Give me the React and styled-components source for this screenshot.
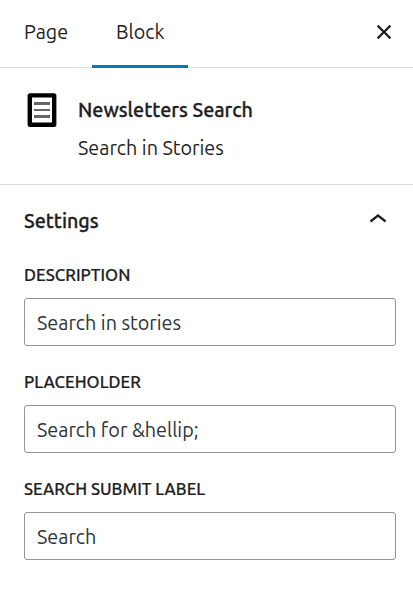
import React from 'react';
import styled, { createGlobalStyle } from 'styled-components';

const fields = [
  { id: 'description', label: 'Description', value: 'Search in stories' },
  { id: 'placeholder', label: 'Placeholder', value: 'Search for &hellip;' },
  { id: 'submit', label: 'Search submit label', value: 'Search' },
];

function App() {
  return (
    <>
      <GlobalStyle />
      <Sidebar>
        <Tabs>
          <Tab>Page</Tab>
          <Tab $active>Block</Tab>
          <CloseButton aria-label='Close settings'>
            <CloseIcon />
          </CloseButton>
        </Tabs>

        <BlockCard>
          <BlockIcon />
          <BlockInfo>
            <BlockTitle>Newsletters Search</BlockTitle>
            <BlockDescription>Search in Stories</BlockDescription>
          </BlockInfo>
        </BlockCard>

        <PanelHeader>
          <PanelTitle>Settings</PanelTitle>
          <ChevronUp />
        </PanelHeader>

        <PanelBody>
          {fields.map((field) => (
            <Field key={field.id}>
              <Label htmlFor={field.id}>{field.label}</Label>
              <Input id={field.id} type='text' defaultValue={field.value} />
            </Field>
          ))}
        </PanelBody>
      </Sidebar>
    </>
  );
}

export default App;

function CloseIcon() {
  return (
    <svg width='36' height='36' viewBox='0 0 24 24' fill='#1e1e1e'>
      <path d='M12 13.06l3.712 3.713 1.061-1.06L13.061 12l3.712-3.712-1.06-1.06L12 10.938 8.288 7.227l-1.061 1.06L10.939 12l-3.712 3.712 1.06 1.061L12 13.061z' />
    </svg>
  );
}

function ChevronUp() {
  return (
    <svg width='36' height='36' viewBox='0 0 24 24' fill='#1e1e1e'>
      <path d='M6.5 12.4L12 8l5.5 4.4-.9 1.2L12 10l-4.5 3.6-1-1.2z' />
    </svg>
  );
}

function BlockIcon() {
  return (
    <svg width='36' height='36' viewBox='0 0 36 36'>
      <rect x='3.6' y='1.2' width='28.8' height='33.8' rx='2.5' fill='#000' />
      <rect x='8' y='5.5' width='20' height='25' fill='#fff' />
      <path d='M10 10h16v3H10zM10 17h16v2H10zM10 23h16v3H10z' fill='#666' />
    </svg>
  );
}

const GlobalStyle = createGlobalStyle`
  *, *::before, *::after {
    box-sizing: border-box;
  }
  body {
    margin: 0;
    background: #fff;
    color: #1e1e1e;
    font-family: Ubuntu, "Noto Sans", "Open Sans", sans-serif;
    font-size: 19.75px;
  }
`

const Sidebar = styled.aside`
  width: 413px;
  height: 594px;
  overflow: hidden;
  background: #fff;
`

const Tabs = styled.div`
  display: flex;
  height: 68px;
  border-bottom: 1px solid #ddd;
`

const Tab = styled.button`
  height: 68px;
  padding: 0 24px 5px;
  width: ${(props) => (props.$active ? '96px' : '92px')};
  border: 0;
  background: none;
  color: inherit;
  font: inherit;
  text-align: left;
  box-shadow: ${(props) => (props.$active ? 'inset 0 -3px #007cba' : 'none')};
`

const CloseButton = styled.button`
  display: flex;
  align-items: center;
  margin-left: auto;
  padding: 0 11px 3px 0;
  border: 0;
  background: none;
`

const BlockCard = styled.div`
  display: flex;
  height: 117px;
  padding: 24px;
  border-bottom: 1px solid #ddd;
`

const BlockInfo = styled.div`
  margin-left: 18px;
  white-space: nowrap;
`

const BlockTitle = styled.h2`
  margin: 4px 0 10px;
  font-size: 19.7px;
  font-weight: 500;
  line-height: 28px;
  -webkit-text-stroke: 0.3px;
`

const BlockDescription = styled.div`
  line-height: 28px;
`

const PanelHeader = styled.div`
  display: flex;
  align-items: flex-start;
  justify-content: space-between;
  height: 77px;
  padding: 17px 17px 0 24px;
`

const PanelTitle = styled.h2`
  margin: 5px 0 0;
  font-size: 19.7px;
  font-weight: 500;
  line-height: 28px;
  -webkit-text-stroke: 0.3px;
`

const PanelBody = styled.div`
  display: flex;
  flex-direction: column;
  gap: 24px;
  padding: 0 17px 0 24px;
`

const Field = styled.div`
  height: 83px;
`

const Label = styled.label`
  display: block;
  height: 36px;
  font-size: 16.75px;
  font-weight: 500;
  line-height: 26px;
  text-transform: uppercase;
  -webkit-text-stroke: 0.2px;
`

const Input = styled.input`
  display: block;
  width: 372px;
  height: 48px;
  padding: 1px 12px 0;
  border: 1px solid #949494;
  border-radius: 3px;
  background: #fff;
  color: #2c3338;
  font: inherit;
`
